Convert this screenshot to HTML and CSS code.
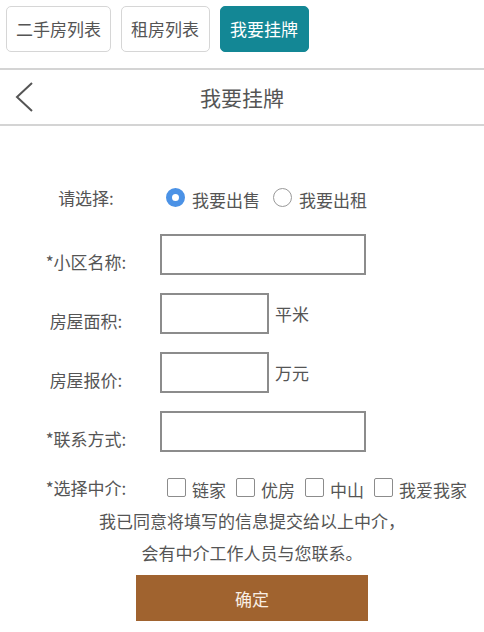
FILE: index.html
```html
<!DOCTYPE html>
<html lang="zh-CN">
<head>
    <meta charset="UTF-8">
    <meta name="viewport" content="width=device-width, initial-scale=1.0">
    <title>我要挂牌</title>
    <link rel="stylesheet" href="styles.css">
</head>
<body>
    <div class="tabs">
        <a class="tab">二手房列表</a>
        <a class="tab">租房列表</a>
        <a class="tab active">我要挂牌</a>
    </div>

    <div class="header">
        <span class="back">
            <svg width="20" height="32" viewBox="0 0 20 32">
                <polyline points="18,2 3,16 18,30" fill="none" stroke="#555" stroke-width="2"/>
            </svg>
        </span>
        <h1>我要挂牌</h1>
        <span></span>
    </div>

    <form class="form">
        <div class="row radio-row">
            <label class="label">请选择:</label>
            <div class="field">
                <span class="radio checked"></span><span class="opt">我要出售</span>
                <span class="radio"></span><span class="opt">我要出租</span>
            </div>
        </div>
        <div class="row input-row">
            <label class="label">*小区名称:</label>
            <div class="field"><input type="text" class="wide"></div>
        </div>
        <div class="row input-row">
            <label class="label">房屋面积:</label>
            <div class="field"><input type="text" class="short"><span class="unit">平米</span></div>
        </div>
        <div class="row input-row">
            <label class="label">房屋报价:</label>
            <div class="field"><input type="text" class="short"><span class="unit">万元</span></div>
        </div>
        <div class="row input-row">
            <label class="label">*联系方式:</label>
            <div class="field"><input type="text" class="wide"></div>
        </div>
        <div class="row check-row">
            <label class="label">*选择中介:</label>
            <div class="field">
                <span class="check"></span><span class="opt">链家</span>
                <span class="check"></span><span class="opt">优房</span>
                <span class="check"></span><span class="opt">中山</span>
                <span class="check"></span><span class="opt">我爱我家</span>
            </div>
        </div>
        <p class="note">我已同意将填写的信息提交给以上中介，<br>会有中介工作人员与您联系。</p>
        <button type="button" class="submit">确定</button>
    </form>
</body>
</html>
```

FILE: styles.css
```css
body {
    margin: 0;
    background-color: #fff;
    font-family: "Noto Sans CJK SC", "Noto Sans", sans-serif;
    color: #555;
}

.tabs {
    display: flex;
    gap: 10px;
    padding: 6px 6px 0;
}

.tab {
    box-sizing: border-box;
    height: 46px;
    padding: 0 9px;
    border: 1px solid #d6d6d6;
    border-radius: 5px;
    font-size: 17px;
    line-height: 44px;
    color: #555;
}

.tab:first-child {
    width: 105px;
}

.tab:nth-child(2) {
    width: 89px;
}

.tab.active {
    width: 89px;
    background-color: #138795;
    border-color: #138795;
    color: #fff;
}

.header {
    display: grid;
    grid-template-columns: 50px 1fr 50px;
    align-items: center;
    height: 54px;
    margin-top: 16px;
    border-top: 2px solid #d4d4d4;
    border-bottom: 2px solid #d4d4d4;
}

.back {
    display: flex;
    padding-left: 14px;
}

.header h1 {
    margin: 0;
    text-align: center;
    font-size: 21px;
    font-weight: normal;
    color: #555;
}

.form {
    margin-top: 51px;
    padding-left: 20px;
}

.row {
    display: flex;
    align-items: center;
}

.label {
    width: 132px;
    text-align: center;
    font-size: 17px;
}

.field {
    display: flex;
    align-items: center;
    margin-left: 8px;
    font-size: 17px;
}

.radio-row {
    height: 40px;
}

.radio {
    box-sizing: border-box;
    width: 19px;
    height: 19px;
    margin-left: 6px;
    border: 1px solid #999;
    border-radius: 50%;
}

.radio.checked {
    border: 6px solid #4b92e6;
}

.radio + .opt {
    margin-left: 7px;
    margin-top: 4px;
}

.radio-row .opt:nth-child(2) {
    margin-right: 7px;
}

.input-row {
    height: 41px;
    margin-top: 18px;
}

.radio-row + .input-row {
    margin-top: 17px;
}

.input-row .label {
    align-self: flex-end;
    line-height: 26px;
}

input {
    box-sizing: border-box;
    height: 41px;
    margin: 0;
    border: 2px solid #8c8c8c;
    background: #fff;
}

input.wide {
    width: 206px;
}

input.short {
    width: 109px;
}

.unit {
    margin-left: 6px;
}

.check-row {
    height: 40px;
    margin-top: 15px;
}

.check {
    box-sizing: border-box;
    width: 19px;
    height: 19px;
    margin-left: 7px;
    border: 1px solid #8c8c8c;
    border-radius: 2px;
}

.check + .opt {
    margin-left: 6px;
    margin-right: 3px;
    margin-top: 4px;
}

.note {
    margin: -2px 0 0;
    text-align: center;
    font-size: 17px;
    line-height: 32px;
}

.submit {
    display: block;
    width: 232px;
    height: 46px;
    margin: 6px auto 0;
    border: none;
    background-color: #a0632f;
    color: #f8eee4;
    font-family: inherit;
    font-size: 17px;
}
```
